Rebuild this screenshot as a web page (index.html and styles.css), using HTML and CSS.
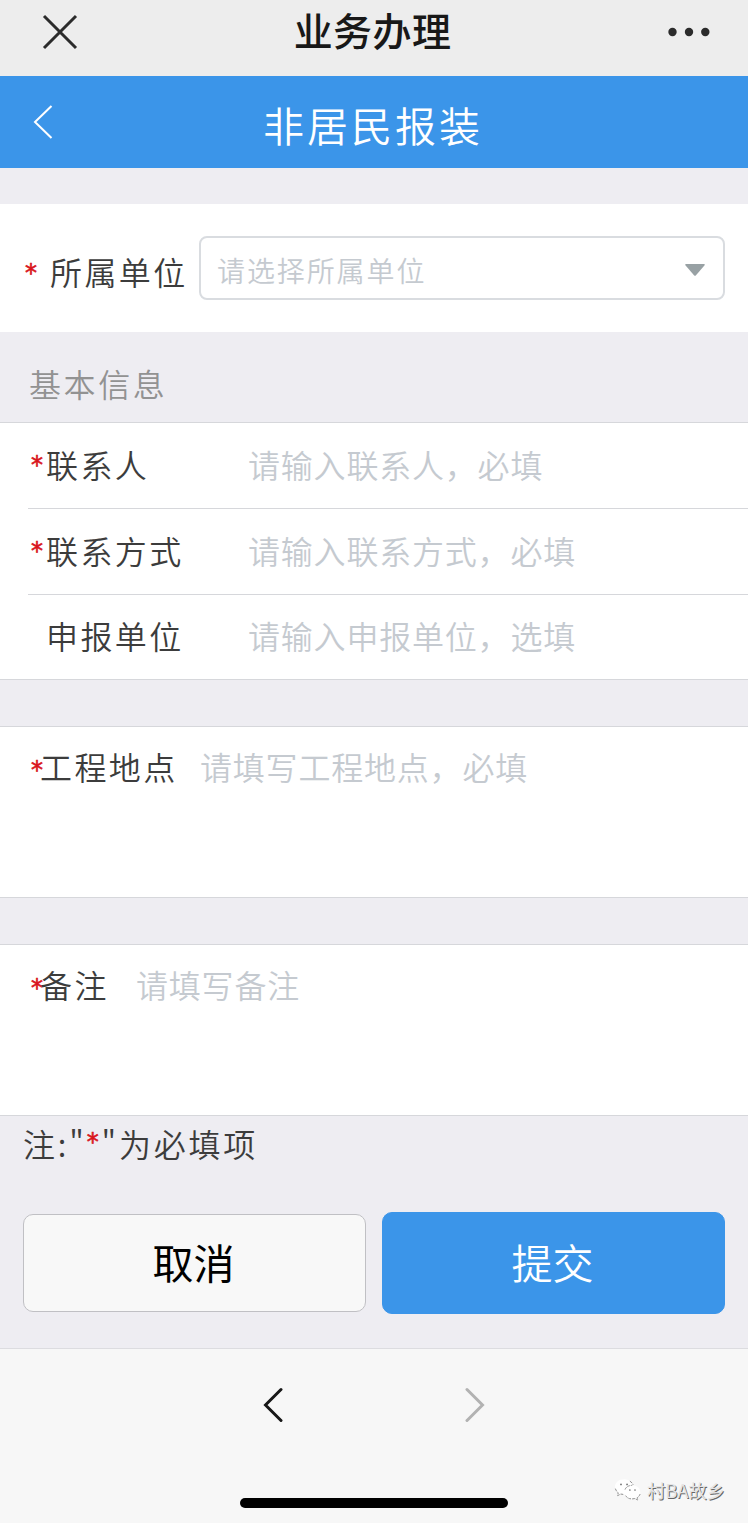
FILE: index.html
```html
<!DOCTYPE html>
<html lang="zh-CN">
<head>
  <meta charset="UTF-8">
  <meta name="viewport" content="width=device-width, initial-scale=1.0">
  <title>业务办理</title>
  <link rel="stylesheet" href="styles.css">
</head>
<body>

  <div class="nav-bar">
    <svg class="close" width="36" height="36" viewBox="0 0 36 36"><path d="M2 2L34 34M34 2L2 34"/></svg>
    <h1>业务办理</h1>
    <svg class="more" width="44" height="10" viewBox="0 0 44 10"><circle cx="5.5" cy="5" r="4.2"/><circle cx="22" cy="5" r="4.2"/><circle cx="38.3" cy="5" r="4.2"/></svg>
  </div>

  <div class="header">
    <svg class="back" width="20" height="36" viewBox="0 0 20 36"><path d="M18.5 2L2 18L18.5 34"/></svg>
    <h2>非居民报装</h2>
  </div>

  <form>
    <div class="unit">
      <span class="star">*</span>
      <label>所属单位</label>
      <div class="select">
        <span>请选择所属单位</span>
        <svg width="20" height="12" viewBox="0 0 20 12"><path d="M1 0H19Q20.5 0 19.4 1.4L11 11.2Q10 12.2 9 11.2L.6 1.4Q-.5 0 1 0Z"/></svg>
      </div>
    </div>

    <div class="section-title">基本信息</div>
    <div class="list">
      <div class="row">
        <span class="star">*</span>
        <label>联系人</label>
        <input type="text" placeholder="请输入联系人，必填">
      </div>
      <div class="row">
        <span class="star">*</span>
        <label>联系方式</label>
        <input type="text" placeholder="请输入联系方式，必填">
      </div>
      <div class="row">
        <span class="star"></span>
        <label>申报单位</label>
        <input type="text" placeholder="请输入申报单位，选填">
      </div>
    </div>

    <div class="area">
      <span class="star">*</span>
      <label>工程地点</label>
      <textarea placeholder="请填写工程地点，必填"></textarea>
    </div>

    <div class="area remark">
      <span class="star">*</span>
      <label>备注</label>
      <textarea placeholder="请填写备注"></textarea>
    </div>

    <p class="note">注:"<span class="star">*</span>"为必填项</p>

    <div class="buttons">
      <button type="button" class="cancel">取消</button>
      <button type="button" class="submit">提交</button>
    </div>
  </form>

  <div class="toolbar">
    <div class="arrows">
      <svg width="20" height="36" viewBox="0 0 20 36"><path d="M18 2.5L2.5 18L18 33.5"/></svg>
      <svg class="disabled" width="20" height="36" viewBox="0 0 20 36"><path d="M2 2.5L17.5 18L2 33.5"/></svg>
    </div>
    <div class="home-bar"></div>
    <div class="watermark">
      <svg width="28" height="25" viewBox="0 0 30 26">
        <path class="bubble" d="M11 1C5 1 1 4.700 1 9.200C1 12 2.500 14 4.500 15.500L3.800 18.500L7.300 16.800L11 17.300C17 17.300 21 13.500 21 9.200S17 1 11 1Z"/>
        <path class="shade" d="M1.500 11Q2.500 14 4.500 15.500L3.800 18.500L7.300 16.800L10.500 17.300M17 3Q19.500 4.500 20.500 7"/>
        <path class="bubble" d="M19.500 7.500C14.500 7.500 11 10.700 11 14.800S14.500 22 19.500 22L22.500 21.600L25.500 23.200L24.900 20.700C26.900 19.300 28.200 17.200 28.200 14.800C28.200 10.700 24.500 7.500 19.500 7.500Z"/>
        <path class="shade" d="M11.800 12Q13.500 7.700 19.500 7.500M12.500 18.500Q14.500 22 19.500 22L22.500 21.600L25.500 23.200L24.900 20.700Q27 19.300 28 16.800"/>
        <circle cx="7.500" cy="6.500" r="1"/><circle cx="14" cy="6.500" r="1"/><circle cx="17" cy="12.500" r=".9"/><circle cx="22.500" cy="12.500" r=".9"/>
      </svg>
      <span>村BA故乡</span>
    </div>
  </div>

</body>
</html>
```
FILE: styles.css
```css
* {
  box-sizing: border-box;
}

body {
  margin: 0;
  background: #eeedf2;
  font-family: "Noto Sans CJK SC", sans-serif;
  font-weight: 350;
  color: #3c3c3c;
}

svg {
  display: block;
  fill: none;
}

h1, h2, p {
  margin: 0;
}

.nav-bar {
  height: 76px;
  background: #ededed;
  display: flex;
  justify-content: space-between;
  padding: 0 37px 0 42px;
}

.nav-bar h1 {
  font-size: 39px;
  font-weight: 500;
  letter-spacing: .4px;
  line-height: 59px;
  color: #181818;
}

.close {
  margin-top: 14px;
  stroke: #2b2b2b;
  stroke-width: 3;
}

.more {
  margin-top: 27px;
  fill: #2b2b2b;
}

.header {
  height: 92px;
  background: #3b95e9;
  display: flex;
}

.header h2 {
  flex: 1;
  font-size: 41px;
  font-weight: 350;
  letter-spacing: 3px;
  line-height: 97px;
  color: #fff;
  padding-left: 210px;
}

.back {
  margin: 28px 0 0 33px;
  stroke: #fff;
  stroke-width: 2;
}

.star {
  color: #d9141c;
  font-family: "DejaVu Sans", sans-serif;
  font-size: 24px;
  font-weight: 400;
  -webkit-text-stroke: .6px #d9141c;
}

label {
  font-size: 32px;
  letter-spacing: 2.400px;
  white-space: nowrap;
}

.unit {
  height: 128px;
  margin-top: 36px;
  padding: 0 23px 0 25px;
  background: #fff;
  display: flex;
  align-items: center;
}

.unit .star {
  width: 25px;
  padding-top: 10px;
}

.unit label {
  width: 149px;
  padding-top: 5px;
}

.select {
  flex: 1;
  height: 64px;
  padding: 4px 18px 0 16px;
  border: 2px solid #d9dce0;
  border-radius: 8px;
  display: flex;
  align-items: center;
  justify-content: space-between;
  font-size: 28px;
  letter-spacing: 1.900px;
  color: #c5cad0;
}

.select svg {
  fill: #98a1a4;
}

.section-title {
  height: 90px;
  padding-left: 29px;
  font-size: 32px;
  letter-spacing: 2.600px;
  line-height: 103px;
  color: #929292;
}

.list, .area {
  background: #fff;
  border-top: 1px solid #d6d7db;
  border-bottom: 1px solid #d6d7db;
}

.list {
  padding-left: 28px;
}

.row {
  height: 86px;
  display: flex;
  align-items: center;
}

.row:first-child {
  height: 85px;
}

.row + .row {
  border-top: 1px solid #d6d7db;
}

.row:last-child {
  height: 85px;
}

.row .star {
  width: 18px;
  padding: 0 0 2px 3px;
}

.row label {
  width: 202px;
  padding-bottom: 4px;
}

input, textarea {
  flex: 1;
  min-width: 0;
  padding: 0;
  border: 0;
  outline: 0;
  resize: none;
  background: transparent;
  font: inherit;
  font-size: 32px;
  letter-spacing: .8px;
}

input {
  padding-bottom: 4px;
}

input::placeholder, textarea::placeholder {
  color: #c5cad0;
}

.area {
  height: 172px;
  margin-top: 46px;
  padding: 17px 0 0 31px;
  display: flex;
  align-items: flex-start;
  line-height: 45px;
}

.area .star {
  width: 9px;
  padding-top: 4px;
}

.area label {
  width: 160px;
}

.area textarea {
  height: 140px;
}

.remark label {
  width: 96px;
}

.note {
  height: 96px;
  padding-left: 23px;
  font-size: 32px;
  letter-spacing: 2.800px;
  line-height: 54px;
}

.note .star {
  line-height: 0;
  vertical-align: 7px;
}

.buttons {
  padding: 0 23px 34px;
  display: flex;
  align-items: center;
  gap: 16px;
}

.buttons button {
  flex: 1;
  height: 102px;
  padding: 0 2px 4px 0;
  border: 1px solid #3b95e9;
  border-radius: 10px;
  background: #3b95e9;
  font-family: inherit;
  font-size: 41px;
  font-weight: 350;
  color: #fff;
}

.buttons .cancel {
  height: 98px;
  border-color: #c0c0c4;
  background: #f8f8f8;
  font-weight: 400;
  color: #000;
}

.toolbar {
  position: relative;
  height: 175px;
  border-top: 1px solid #dcdce0;
  background: #f7f7f7;
}

.arrows {
  padding-top: 38px;
  display: flex;
  justify-content: center;
  gap: 182px;
}

.arrows svg {
  stroke: #181818;
  stroke-width: 3;
  stroke-linecap: round;
}

.arrows .disabled {
  stroke: #b2b2b2;
}

.home-bar {
  width: 268px;
  height: 10px;
  margin: 75px auto 0;
  border-radius: 5px;
  background: #000;
}

/* account mark laid over the bottom right corner */
.watermark {
  position: absolute;
  right: 23px;
  bottom: 19px;
  display: flex;
  align-items: center;
  gap: 5px;
  font-size: 18.300px;
  font-weight: 400;
  line-height: 28px;
  color: #e4e4e4;
  text-shadow: 1px 1px 0 #666;
}

.watermark .bubble {
  fill: #fff;
}

.watermark .shade {
  stroke: #888;
  stroke-dasharray: 3 1;
}

.watermark circle {
  fill: #777;
}
```
